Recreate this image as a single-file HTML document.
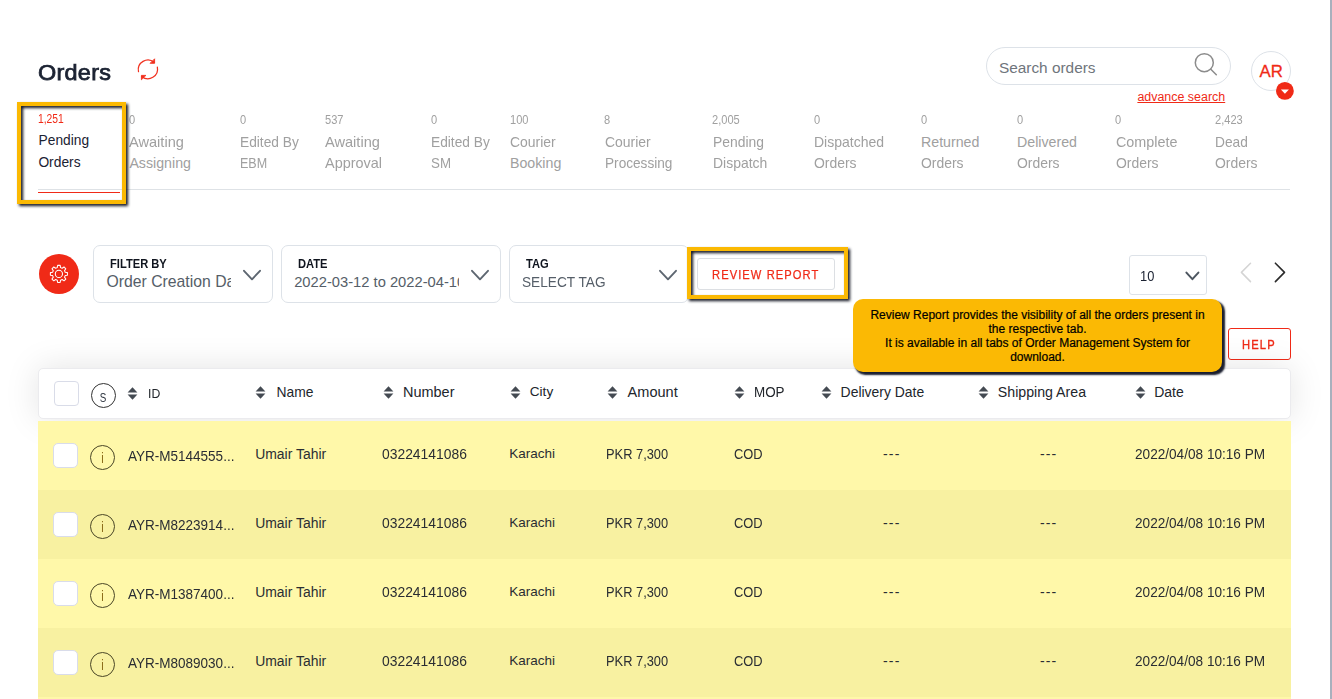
<!DOCTYPE html>
<html><head><meta charset="utf-8"><title>Orders</title>
<style>
html,body{margin:0;padding:0;background:#fff;}
body{width:1332px;height:699px;position:relative;overflow:hidden;font-family:"Liberation Sans",sans-serif;}
.t{position:absolute;white-space:pre;display:block;}
.b{position:absolute;box-sizing:border-box;}
svg{position:absolute;overflow:visible;}
</style></head><body>

<div class="b" style="left:1330px;top:0;width:2px;height:699px;background:#a9b0bd"></div>
<span class="t " style="left:38.10px;top:62.88px;font-size:21.7px;line-height:20px;color:#1b2232;-webkit-text-stroke:0.75px #1b2232;letter-spacing:0.25px;transform:scaleX(1.08);transform-origin:0 0;">Orders</span>
<svg style="left:132px;top:54px" width="32" height="32" viewBox="0 0 32 32" fill="none" stroke="#f1301e" stroke-width="1.25" stroke-linecap="round" stroke-linejoin="round">
<path d="M6.5 17.6 A9.6 9.6 0 0 1 22.2 8.4"/><path d="M25.35 13.1 A9.6 9.6 0 0 1 9.8 22.4"/>
<path d="M22.6 5.2 L22.6 9.3 L18.5 9.3 Z" fill="#f1301e" stroke-width="0.9"/>
<path d="M9.4 25.4 L9.4 21.4 L13.5 21.4 Z" fill="#f1301e" stroke-width="0.9"/>
</svg>
<div class="b" style="left:986px;top:47px;width:245px;height:38px;border:1px solid #dde2e8;border-radius:19px;"></div>
<span class="t " style="left:998.90px;top:57.96px;font-size:15.4px;line-height:20px;color:#6f757c;">Search orders</span>
<svg style="left:1190px;top:48px" width="32" height="32" viewBox="0 0 32 32" fill="none" stroke="#8c8c8c" stroke-width="1.5" stroke-linecap="round"><circle cx="14.3" cy="14.7" r="9"/><path d="M20.8 21.2 L26.3 26.7"/></svg>
<span class="t " style="left:1137.40px;top:87.49px;font-size:12.45px;line-height:20px;color:#f02a17;text-decoration:underline;text-underline-offset:1.2px;text-decoration-thickness:1px;">advance search</span>
<div class="b" style="left:1251px;top:51px;width:40px;height:40px;border:1px solid #dde2e8;border-radius:50%;"></div>
<span class="t " style="left:1259.60px;top:61.88px;font-size:16.8px;line-height:20px;color:#f02a17;-webkit-text-stroke:0.3px #f02a17;">AR</span>
<svg style="left:1275px;top:81px" width="20" height="20" viewBox="0 0 20 20"><circle cx="9.9" cy="9.9" r="8.9" fill="#f02a17"/><path d="M5.9 8.5 L13.9 8.5 L9.9 12.8 Z" fill="#fff"/></svg>
<span class="t " style="left:38.30px;top:108.81px;font-size:12.1px;line-height:20px;color:#f02a17;transform:scaleX(0.852);transform-origin:0 0;">1,251</span>
<span class="t " style="left:38.60px;top:131.24px;font-size:13.75px;line-height:20px;color:#1b2232;">Pending</span>
<span class="t " style="left:38.40px;top:153.42px;font-size:13.8px;line-height:20px;color:#1b2232;">Orders</span>
<span class="t " style="left:129.10px;top:109.70px;font-size:12.4px;line-height:20px;color:#a0a0a0;transform:scaleX(0.894);transform-origin:0 0;">0</span>
<span class="t " style="left:129.40px;top:131.68px;font-size:14.2px;line-height:20px;color:#a0a0a0;transform:scaleX(1.028);transform-origin:0 0;">Awaiting</span>
<span class="t " style="left:129.40px;top:152.88px;font-size:14.2px;line-height:20px;color:#a0a0a0;">Assigning</span>
<span class="t " style="left:239.70px;top:109.70px;font-size:12.4px;line-height:20px;color:#a0a0a0;transform:scaleX(0.894);transform-origin:0 0;">0</span>
<span class="t " style="left:240.00px;top:131.68px;font-size:14.2px;line-height:20px;color:#a0a0a0;transform:scaleX(0.969);transform-origin:0 0;">Edited By</span>
<span class="t " style="left:240.00px;top:152.88px;font-size:14.2px;line-height:20px;color:#a0a0a0;transform:scaleX(0.884);transform-origin:0 0;">EBM</span>
<span class="t " style="left:325.10px;top:109.70px;font-size:12.4px;line-height:20px;color:#a0a0a0;transform:scaleX(0.894);transform-origin:0 0;">537</span>
<span class="t " style="left:325.40px;top:131.68px;font-size:14.2px;line-height:20px;color:#a0a0a0;transform:scaleX(1.028);transform-origin:0 0;">Awaiting</span>
<span class="t " style="left:325.40px;top:152.88px;font-size:14.2px;line-height:20px;color:#a0a0a0;transform:scaleX(1.019);transform-origin:0 0;">Approval</span>
<span class="t " style="left:430.70px;top:109.70px;font-size:12.4px;line-height:20px;color:#a0a0a0;transform:scaleX(0.894);transform-origin:0 0;">0</span>
<span class="t " style="left:431.00px;top:131.68px;font-size:14.2px;line-height:20px;color:#a0a0a0;transform:scaleX(0.969);transform-origin:0 0;">Edited By</span>
<span class="t " style="left:431.00px;top:152.88px;font-size:14.2px;line-height:20px;color:#a0a0a0;transform:scaleX(0.939);transform-origin:0 0;">SM</span>
<span class="t " style="left:509.70px;top:109.70px;font-size:12.4px;line-height:20px;color:#a0a0a0;transform:scaleX(0.894);transform-origin:0 0;">100</span>
<span class="t " style="left:510.00px;top:131.68px;font-size:14.2px;line-height:20px;color:#a0a0a0;transform:scaleX(0.983);transform-origin:0 0;">Courier</span>
<span class="t " style="left:510.00px;top:152.88px;font-size:14.2px;line-height:20px;color:#a0a0a0;">Booking</span>
<span class="t " style="left:604.20px;top:109.70px;font-size:12.4px;line-height:20px;color:#a0a0a0;transform:scaleX(0.894);transform-origin:0 0;">8</span>
<span class="t " style="left:604.50px;top:131.68px;font-size:14.2px;line-height:20px;color:#a0a0a0;transform:scaleX(0.983);transform-origin:0 0;">Courier</span>
<span class="t " style="left:604.50px;top:152.88px;font-size:14.2px;line-height:20px;color:#a0a0a0;transform:scaleX(0.961);transform-origin:0 0;">Processing</span>
<span class="t " style="left:712.20px;top:109.70px;font-size:12.4px;line-height:20px;color:#a0a0a0;transform:scaleX(0.894);transform-origin:0 0;">2,005</span>
<span class="t " style="left:712.50px;top:131.68px;font-size:14.2px;line-height:20px;color:#a0a0a0;transform:scaleX(0.979);transform-origin:0 0;">Pending</span>
<span class="t " style="left:712.50px;top:152.88px;font-size:14.2px;line-height:20px;color:#a0a0a0;transform:scaleX(0.983);transform-origin:0 0;">Dispatch</span>
<span class="t " style="left:813.70px;top:109.70px;font-size:12.4px;line-height:20px;color:#a0a0a0;transform:scaleX(0.894);transform-origin:0 0;">0</span>
<span class="t " style="left:814.00px;top:131.68px;font-size:14.2px;line-height:20px;color:#a0a0a0;transform:scaleX(0.988);transform-origin:0 0;">Dispatched</span>
<span class="t " style="left:814.00px;top:152.88px;font-size:14.2px;line-height:20px;color:#a0a0a0;transform:scaleX(0.982);transform-origin:0 0;">Orders</span>
<span class="t " style="left:920.70px;top:109.70px;font-size:12.4px;line-height:20px;color:#a0a0a0;transform:scaleX(0.894);transform-origin:0 0;">0</span>
<span class="t " style="left:921.00px;top:131.68px;font-size:14.2px;line-height:20px;color:#a0a0a0;">Returned</span>
<span class="t " style="left:921.00px;top:152.88px;font-size:14.2px;line-height:20px;color:#a0a0a0;transform:scaleX(0.982);transform-origin:0 0;">Orders</span>
<span class="t " style="left:1016.70px;top:109.70px;font-size:12.4px;line-height:20px;color:#a0a0a0;transform:scaleX(0.894);transform-origin:0 0;">0</span>
<span class="t " style="left:1017.00px;top:131.68px;font-size:14.2px;line-height:20px;color:#a0a0a0;">Delivered</span>
<span class="t " style="left:1017.00px;top:152.88px;font-size:14.2px;line-height:20px;color:#a0a0a0;transform:scaleX(0.982);transform-origin:0 0;">Orders</span>
<span class="t " style="left:1115.20px;top:109.70px;font-size:12.4px;line-height:20px;color:#a0a0a0;transform:scaleX(0.894);transform-origin:0 0;">0</span>
<span class="t " style="left:1115.50px;top:131.68px;font-size:14.2px;line-height:20px;color:#a0a0a0;transform:scaleX(1.012);transform-origin:0 0;">Complete</span>
<span class="t " style="left:1115.50px;top:152.88px;font-size:14.2px;line-height:20px;color:#a0a0a0;transform:scaleX(0.982);transform-origin:0 0;">Orders</span>
<span class="t " style="left:1214.70px;top:109.70px;font-size:12.4px;line-height:20px;color:#a0a0a0;transform:scaleX(0.894);transform-origin:0 0;">2,423</span>
<span class="t " style="left:1215.00px;top:131.68px;font-size:14.2px;line-height:20px;color:#a0a0a0;transform:scaleX(0.969);transform-origin:0 0;">Dead</span>
<span class="t " style="left:1215.00px;top:152.88px;font-size:14.2px;line-height:20px;color:#a0a0a0;transform:scaleX(0.982);transform-origin:0 0;">Orders</span>
<div class="b" style="left:38px;top:189px;width:1252px;height:1px;background:#dee2e6"></div>
<div class="b" style="left:38px;top:192px;width:82px;height:1px;background:#f02a17"></div>
<div class="b" style="left:39px;top:254px;width:40px;height:40px;border-radius:50%;background:#f02a17"></div>
<svg style="left:0;top:0" width="120" height="320" viewBox="0 0 120 320" fill="none" stroke="#fff" stroke-width="1.05" stroke-linejoin="round"><path d="M57.22 267.62 L57.63 265.39 L60.17 265.39 L60.58 267.62 L62.15 268.27 L64.02 266.99 L65.81 268.78 L64.53 270.65 L65.18 272.22 L67.41 272.63 L67.41 275.17 L65.18 275.58 L64.53 277.15 L65.81 279.02 L64.02 280.81 L62.15 279.53 L60.58 280.18 L60.17 282.41 L57.63 282.41 L57.22 280.18 L55.65 279.53 L53.78 280.81 L51.99 279.02 L53.27 277.15 L52.62 275.58 L50.39 275.17 L50.39 272.63 L52.62 272.22 L53.27 270.65 L51.99 268.78 L53.78 266.99 L55.65 268.27 Z"/><circle cx="58.9" cy="273.9" r="3.6"/></svg>
<div class="b" style="left:93px;top:245px;width:180px;height:58px;border:1px solid #dde2e8;border-radius:7px;"></div><span class="t " style="left:109.50px;top:254.27px;font-size:12.2px;line-height:20px;color:#10151f;font-weight:bold;transform:scaleX(0.915);transform-origin:0 0;">FILTER BY</span><div class="b" style="left:104.6px;top:268px;width:126.4px;height:28px;overflow:hidden"><span class="t " style="left:2.00px;top:4.24px;font-size:15.75px;line-height:20px;color:#555e68;">Order Creation Date</span></div><svg style="left:243px;top:269px" width="18" height="13" viewBox="0 0 18 13" fill="none" stroke="#5d6670" stroke-width="1.9" stroke-linecap="round" stroke-linejoin="round"><path d="M1 1.8 L9 10.3 L17 1.8"/></svg>
<div class="b" style="left:281px;top:245px;width:220px;height:58px;border:1px solid #dde2e8;border-radius:7px;"></div><span class="t " style="left:297.80px;top:254.27px;font-size:12.2px;line-height:20px;color:#10151f;font-weight:bold;transform:scaleX(0.915);transform-origin:0 0;">DATE</span><div class="b" style="left:292.2px;top:268px;width:166.60000000000002px;height:28px;overflow:hidden"><span class="t " style="left:2.00px;top:3.80px;font-size:14.72px;line-height:20px;color:#555e68;">2022-03-12 to 2022-04-10</span></div><svg style="left:471px;top:269px" width="18" height="13" viewBox="0 0 18 13" fill="none" stroke="#5d6670" stroke-width="1.9" stroke-linecap="round" stroke-linejoin="round"><path d="M1 1.8 L9 10.3 L17 1.8"/></svg>
<div class="b" style="left:509px;top:245px;width:180px;height:58px;border:1px solid #dde2e8;border-radius:7px;"></div><span class="t " style="left:525.50px;top:254.27px;font-size:12.2px;line-height:20px;color:#10151f;font-weight:bold;transform:scaleX(0.915);transform-origin:0 0;">TAG</span><div class="b" style="left:520.2px;top:268px;width:139.79999999999995px;height:28px;overflow:hidden"><span class="t " style="left:2.00px;top:4.37px;font-size:15.1px;line-height:20px;color:#555e68;transform:scaleX(0.905);transform-origin:0 0;">SELECT TAG</span></div><svg style="left:659.3px;top:269px" width="18" height="13" viewBox="0 0 18 13" fill="none" stroke="#5d6670" stroke-width="1.9" stroke-linecap="round" stroke-linejoin="round"><path d="M1 1.8 L9 10.3 L17 1.8"/></svg>
<div class="b" style="left:697px;top:258px;width:138px;height:32px;border:1px solid #dcdfe3;border-radius:3px;"></div>
<span class="t " style="left:712.00px;top:264.50px;font-size:12.4px;line-height:20px;color:#f02a17;-webkit-text-stroke:0.25px #f02a17;letter-spacing:1.2px;transform:scaleX(0.9);transform-origin:0 0;">REVIEW REPORT</span>
<div class="b" style="left:1129px;top:255px;width:78px;height:40px;border:1px solid #dde2e8;border-radius:3px;"></div>
<span class="t " style="left:1139.60px;top:265.85px;font-size:14px;line-height:20px;color:#1b2232;transform:scaleX(0.92);transform-origin:0 0;">10</span>
<svg style="left:1184.5px;top:270.5px" width="15" height="11" viewBox="0 0 15 11" fill="none" stroke="#4d5660" stroke-width="2" stroke-linecap="round" stroke-linejoin="round"><path d="M1.4 1.6 L7.4 8.2 L13.4 1.6"/></svg>
<svg style="left:1240px;top:262px" width="12" height="21" viewBox="0 0 12 21" fill="none" stroke="#d4d4d4" stroke-width="1.5" stroke-linecap="round" stroke-linejoin="round"><path d="M10.5 1.2 L1.4 10.4 L10.5 19.6"/></svg>
<svg style="left:1274px;top:262px" width="12" height="21" viewBox="0 0 12 21" fill="none" stroke="#2b2b2b" stroke-width="1.6" stroke-linecap="round" stroke-linejoin="round"><path d="M1.4 1.2 L10.5 10.4 L1.4 19.6"/></svg>
<div class="b" style="left:1228px;top:328px;width:63px;height:32px;border:1px solid #f02a17;border-radius:3px;"></div>
<span class="t " style="left:1242.20px;top:334.60px;font-size:12.4px;line-height:20px;color:#f02a17;-webkit-text-stroke:0.35px #f02a17;letter-spacing:1.3px;transform:scaleX(0.9);transform-origin:0 0;">HELP</span>
<div class="b" style="left:38px;top:368px;width:1253px;height:51px;background:#fff;border:1px solid #ebebee;border-radius:5px;box-shadow:0 0 34px rgba(0,0,0,0.115);"></div>
<div class="b" style="left:38px;top:421px;width:1253px;height:69px;background:#fff8a9"></div>
<div class="b" style="left:53px;top:443px;width:25px;height:25px;background:#fff;border:1px solid #d9dcea;border-radius:5px;"></div>
<div class="b" style="left:90px;top:445px;width:25px;height:25px;border:1px solid #4a4626;border-radius:50%;"></div>
<span class="t " style="left:101.35px;top:449.22px;font-size:13.8px;line-height:20px;color:#8a6a18;transform:scaleX(0.8);transform-origin:50% 50%;">i</span>
<span class="t " style="left:127.80px;top:446.25px;font-size:14.3px;line-height:20px;color:#2a2d33;transform:scaleX(0.945);transform-origin:0 0;">AYR-M5144555...</span>
<span class="t " style="left:255.20px;top:443.97px;font-size:13.94px;line-height:20px;color:#2a2d33;">Umair Tahir</span>
<span class="t " style="left:382.30px;top:444.01px;font-size:14.4px;line-height:20px;color:#2a2d33;transform:scaleX(0.964);transform-origin:0 0;">03224141086</span>
<span class="t " style="left:509.20px;top:444.12px;font-size:13.51px;line-height:20px;color:#2a2d33;">Karachi</span>
<span class="t " style="left:606.40px;top:444.15px;font-size:14px;line-height:20px;color:#2a2d33;transform:scaleX(0.918);transform-origin:0 0;">PKR 7,300</span>
<span class="t " style="left:733.90px;top:444.15px;font-size:14px;line-height:20px;color:#2a2d33;transform:scaleX(0.919);transform-origin:0 0;">COD</span>
<span class="t " style="left:883.00px;top:444.35px;font-size:14px;line-height:20px;color:#2a2d33;letter-spacing:1.2px;">---</span>
<span class="t " style="left:1039.90px;top:444.35px;font-size:14px;line-height:20px;color:#2a2d33;letter-spacing:1.2px;">---</span>
<span class="t " style="left:1135.30px;top:444.38px;font-size:14.2px;line-height:20px;color:#2a2d33;transform:scaleX(0.959);transform-origin:0 0;">2022/04/08 10:16 PM</span>
<div class="b" style="left:38px;top:490px;width:1253px;height:69px;background:#f8f1a1"></div>
<div class="b" style="left:53px;top:512px;width:25px;height:25px;background:#fff;border:1px solid #d9dcea;border-radius:5px;"></div>
<div class="b" style="left:90px;top:514px;width:25px;height:25px;border:1px solid #4a4626;border-radius:50%;"></div>
<span class="t " style="left:101.35px;top:518.22px;font-size:13.8px;line-height:20px;color:#8a6a18;transform:scaleX(0.8);transform-origin:50% 50%;">i</span>
<span class="t " style="left:127.80px;top:515.25px;font-size:14.3px;line-height:20px;color:#2a2d33;transform:scaleX(0.945);transform-origin:0 0;">AYR-M8223914...</span>
<span class="t " style="left:255.20px;top:512.97px;font-size:13.94px;line-height:20px;color:#2a2d33;">Umair Tahir</span>
<span class="t " style="left:382.30px;top:513.01px;font-size:14.4px;line-height:20px;color:#2a2d33;transform:scaleX(0.964);transform-origin:0 0;">03224141086</span>
<span class="t " style="left:509.20px;top:513.12px;font-size:13.51px;line-height:20px;color:#2a2d33;">Karachi</span>
<span class="t " style="left:606.40px;top:513.15px;font-size:14px;line-height:20px;color:#2a2d33;transform:scaleX(0.918);transform-origin:0 0;">PKR 7,300</span>
<span class="t " style="left:733.90px;top:513.15px;font-size:14px;line-height:20px;color:#2a2d33;transform:scaleX(0.919);transform-origin:0 0;">COD</span>
<span class="t " style="left:883.00px;top:513.35px;font-size:14px;line-height:20px;color:#2a2d33;letter-spacing:1.2px;">---</span>
<span class="t " style="left:1039.90px;top:513.35px;font-size:14px;line-height:20px;color:#2a2d33;letter-spacing:1.2px;">---</span>
<span class="t " style="left:1135.30px;top:513.38px;font-size:14.2px;line-height:20px;color:#2a2d33;transform:scaleX(0.959);transform-origin:0 0;">2022/04/08 10:16 PM</span>
<div class="b" style="left:38px;top:559px;width:1253px;height:69px;background:#fff8a9"></div>
<div class="b" style="left:53px;top:581px;width:25px;height:25px;background:#fff;border:1px solid #d9dcea;border-radius:5px;"></div>
<div class="b" style="left:90px;top:583px;width:25px;height:25px;border:1px solid #4a4626;border-radius:50%;"></div>
<span class="t " style="left:101.35px;top:587.22px;font-size:13.8px;line-height:20px;color:#8a6a18;transform:scaleX(0.8);transform-origin:50% 50%;">i</span>
<span class="t " style="left:127.80px;top:584.25px;font-size:14.3px;line-height:20px;color:#2a2d33;transform:scaleX(0.945);transform-origin:0 0;">AYR-M1387400...</span>
<span class="t " style="left:255.20px;top:581.97px;font-size:13.94px;line-height:20px;color:#2a2d33;">Umair Tahir</span>
<span class="t " style="left:382.30px;top:582.01px;font-size:14.4px;line-height:20px;color:#2a2d33;transform:scaleX(0.964);transform-origin:0 0;">03224141086</span>
<span class="t " style="left:509.20px;top:582.12px;font-size:13.51px;line-height:20px;color:#2a2d33;">Karachi</span>
<span class="t " style="left:606.40px;top:582.15px;font-size:14px;line-height:20px;color:#2a2d33;transform:scaleX(0.918);transform-origin:0 0;">PKR 7,300</span>
<span class="t " style="left:733.90px;top:582.15px;font-size:14px;line-height:20px;color:#2a2d33;transform:scaleX(0.919);transform-origin:0 0;">COD</span>
<span class="t " style="left:883.00px;top:582.35px;font-size:14px;line-height:20px;color:#2a2d33;letter-spacing:1.2px;">---</span>
<span class="t " style="left:1039.90px;top:582.35px;font-size:14px;line-height:20px;color:#2a2d33;letter-spacing:1.2px;">---</span>
<span class="t " style="left:1135.30px;top:582.38px;font-size:14.2px;line-height:20px;color:#2a2d33;transform:scaleX(0.959);transform-origin:0 0;">2022/04/08 10:16 PM</span>
<div class="b" style="left:38px;top:628px;width:1253px;height:69px;background:#f8f1a1"></div>
<div class="b" style="left:53px;top:650px;width:25px;height:25px;background:#fff;border:1px solid #d9dcea;border-radius:5px;"></div>
<div class="b" style="left:90px;top:652px;width:25px;height:25px;border:1px solid #4a4626;border-radius:50%;"></div>
<span class="t " style="left:101.35px;top:656.22px;font-size:13.8px;line-height:20px;color:#8a6a18;transform:scaleX(0.8);transform-origin:50% 50%;">i</span>
<span class="t " style="left:127.80px;top:653.25px;font-size:14.3px;line-height:20px;color:#2a2d33;transform:scaleX(0.945);transform-origin:0 0;">AYR-M8089030...</span>
<span class="t " style="left:255.20px;top:650.97px;font-size:13.94px;line-height:20px;color:#2a2d33;">Umair Tahir</span>
<span class="t " style="left:382.30px;top:651.01px;font-size:14.4px;line-height:20px;color:#2a2d33;transform:scaleX(0.964);transform-origin:0 0;">03224141086</span>
<span class="t " style="left:509.20px;top:651.12px;font-size:13.51px;line-height:20px;color:#2a2d33;">Karachi</span>
<span class="t " style="left:606.40px;top:651.15px;font-size:14px;line-height:20px;color:#2a2d33;transform:scaleX(0.918);transform-origin:0 0;">PKR 7,300</span>
<span class="t " style="left:733.90px;top:651.15px;font-size:14px;line-height:20px;color:#2a2d33;transform:scaleX(0.919);transform-origin:0 0;">COD</span>
<span class="t " style="left:883.00px;top:651.35px;font-size:14px;line-height:20px;color:#2a2d33;letter-spacing:1.2px;">---</span>
<span class="t " style="left:1039.90px;top:651.35px;font-size:14px;line-height:20px;color:#2a2d33;letter-spacing:1.2px;">---</span>
<span class="t " style="left:1135.30px;top:651.38px;font-size:14.2px;line-height:20px;color:#2a2d33;transform:scaleX(0.959);transform-origin:0 0;">2022/04/08 10:16 PM</span>
<div class="b" style="left:38px;top:697px;width:1253px;height:69px;background:#fff8a9"></div>
<div class="b" style="left:54px;top:381px;width:25px;height:25px;background:#fff;border:1px solid #d9dce8;border-radius:4px;"></div>
<div class="b" style="left:91px;top:383px;width:25px;height:25px;border:1px solid #333;border-radius:50%;"></div>
<span class="t " style="left:99.40px;top:388.04px;font-size:12.3px;line-height:20px;color:#2f3640;transform:scaleX(0.8);transform-origin:50% 50%;">S</span>
<svg style="left:127.2px;top:386.5px" width="11" height="13" viewBox="0 0 11 13"><path d="M5.5 0.3 L10.4 5.4 L0.6 5.4 Z M0.6 7.6 L10.4 7.6 L5.5 12.7 Z" fill="#444a52"/></svg>
<span class="t " style="left:148.20px;top:384.19px;font-size:13.6px;line-height:20px;color:#22262c;transform:scaleX(0.9);transform-origin:0 0;">ID</span>
<svg style="left:255.3px;top:385.5px" width="11" height="13" viewBox="0 0 11 13"><path d="M5.5 0.3 L10.4 5.4 L0.6 5.4 Z M0.6 7.6 L10.4 7.6 L5.5 12.7 Z" fill="#444a52"/></svg>
<span class="t " style="left:276.60px;top:382.29px;font-size:13.87px;line-height:20px;color:#22262c;">Name</span>
<svg style="left:382.5px;top:385.5px" width="11" height="13" viewBox="0 0 11 13"><path d="M5.5 0.3 L10.4 5.4 L0.6 5.4 Z M0.6 7.6 L10.4 7.6 L5.5 12.7 Z" fill="#444a52"/></svg>
<span class="t " style="left:403.00px;top:382.08px;font-size:14.48px;line-height:20px;color:#22262c;">Number</span>
<svg style="left:509.7px;top:385.5px" width="11" height="13" viewBox="0 0 11 13"><path d="M5.5 0.3 L10.4 5.4 L0.6 5.4 Z M0.6 7.6 L10.4 7.6 L5.5 12.7 Z" fill="#444a52"/></svg>
<span class="t " style="left:529.80px;top:382.39px;font-size:13.59px;line-height:20px;color:#22262c;">City</span>
<svg style="left:607.0px;top:385.5px" width="11" height="13" viewBox="0 0 11 13"><path d="M5.5 0.3 L10.4 5.4 L0.6 5.4 Z M0.6 7.6 L10.4 7.6 L5.5 12.7 Z" fill="#444a52"/></svg>
<span class="t " style="left:627.60px;top:382.06px;font-size:14.54px;line-height:20px;color:#22262c;">Amount</span>
<svg style="left:733.5px;top:385.5px" width="11" height="13" viewBox="0 0 11 13"><path d="M5.5 0.3 L10.4 5.4 L0.6 5.4 Z M0.6 7.6 L10.4 7.6 L5.5 12.7 Z" fill="#444a52"/></svg>
<span class="t " style="left:753.90px;top:382.18px;font-size:14.2px;line-height:20px;color:#22262c;transform:scaleX(0.946);transform-origin:0 0;">MOP</span>
<svg style="left:820.7px;top:385.5px" width="11" height="13" viewBox="0 0 11 13"><path d="M5.5 0.3 L10.4 5.4 L0.6 5.4 Z M0.6 7.6 L10.4 7.6 L5.5 12.7 Z" fill="#444a52"/></svg>
<span class="t " style="left:840.60px;top:382.27px;font-size:13.93px;line-height:20px;color:#22262c;">Delivery Date</span>
<svg style="left:977.9px;top:385.5px" width="11" height="13" viewBox="0 0 11 13"><path d="M5.5 0.3 L10.4 5.4 L0.6 5.4 Z M0.6 7.6 L10.4 7.6 L5.5 12.7 Z" fill="#444a52"/></svg>
<span class="t " style="left:997.80px;top:382.19px;font-size:14.18px;line-height:20px;color:#22262c;">Shipping Area</span>
<svg style="left:1134.8px;top:385.5px" width="11" height="13" viewBox="0 0 11 13"><path d="M5.5 0.3 L10.4 5.4 L0.6 5.4 Z M0.6 7.6 L10.4 7.6 L5.5 12.7 Z" fill="#444a52"/></svg>
<span class="t " style="left:1154.20px;top:382.25px;font-size:14.01px;line-height:20px;color:#22262c;">Date</span>
<div class="b" style="left:853px;top:299px;width:369px;height:73px;background:#fbb904;border-radius:10px;box-shadow:2.5px 2.5px 1.8px rgba(25,30,46,1);"></div>
<div class="b" style="left:853px;top:299px;width:369px;height:73px;text-align:center;font-size:12px;line-height:14px;color:#000;padding-top:8.55px;-webkit-text-stroke:0.2px #000;">Review Report provides the visibility of all the orders present in<br>the respective tab.<br>It is available in all tabs of Order Management System for<br>download.</div>
<div class="b" style="left:17px;top:102px;width:109px;height:102px;border:4px solid #fbb903;filter:drop-shadow(2.7px 2.7px 1.8px rgba(14,17,30,1));"></div>
<div class="b" style="left:687px;top:247px;width:161px;height:52px;border:4px solid #fbb903;filter:drop-shadow(2.7px 2.7px 1.8px rgba(14,17,30,1));"></div>
</body></html>
